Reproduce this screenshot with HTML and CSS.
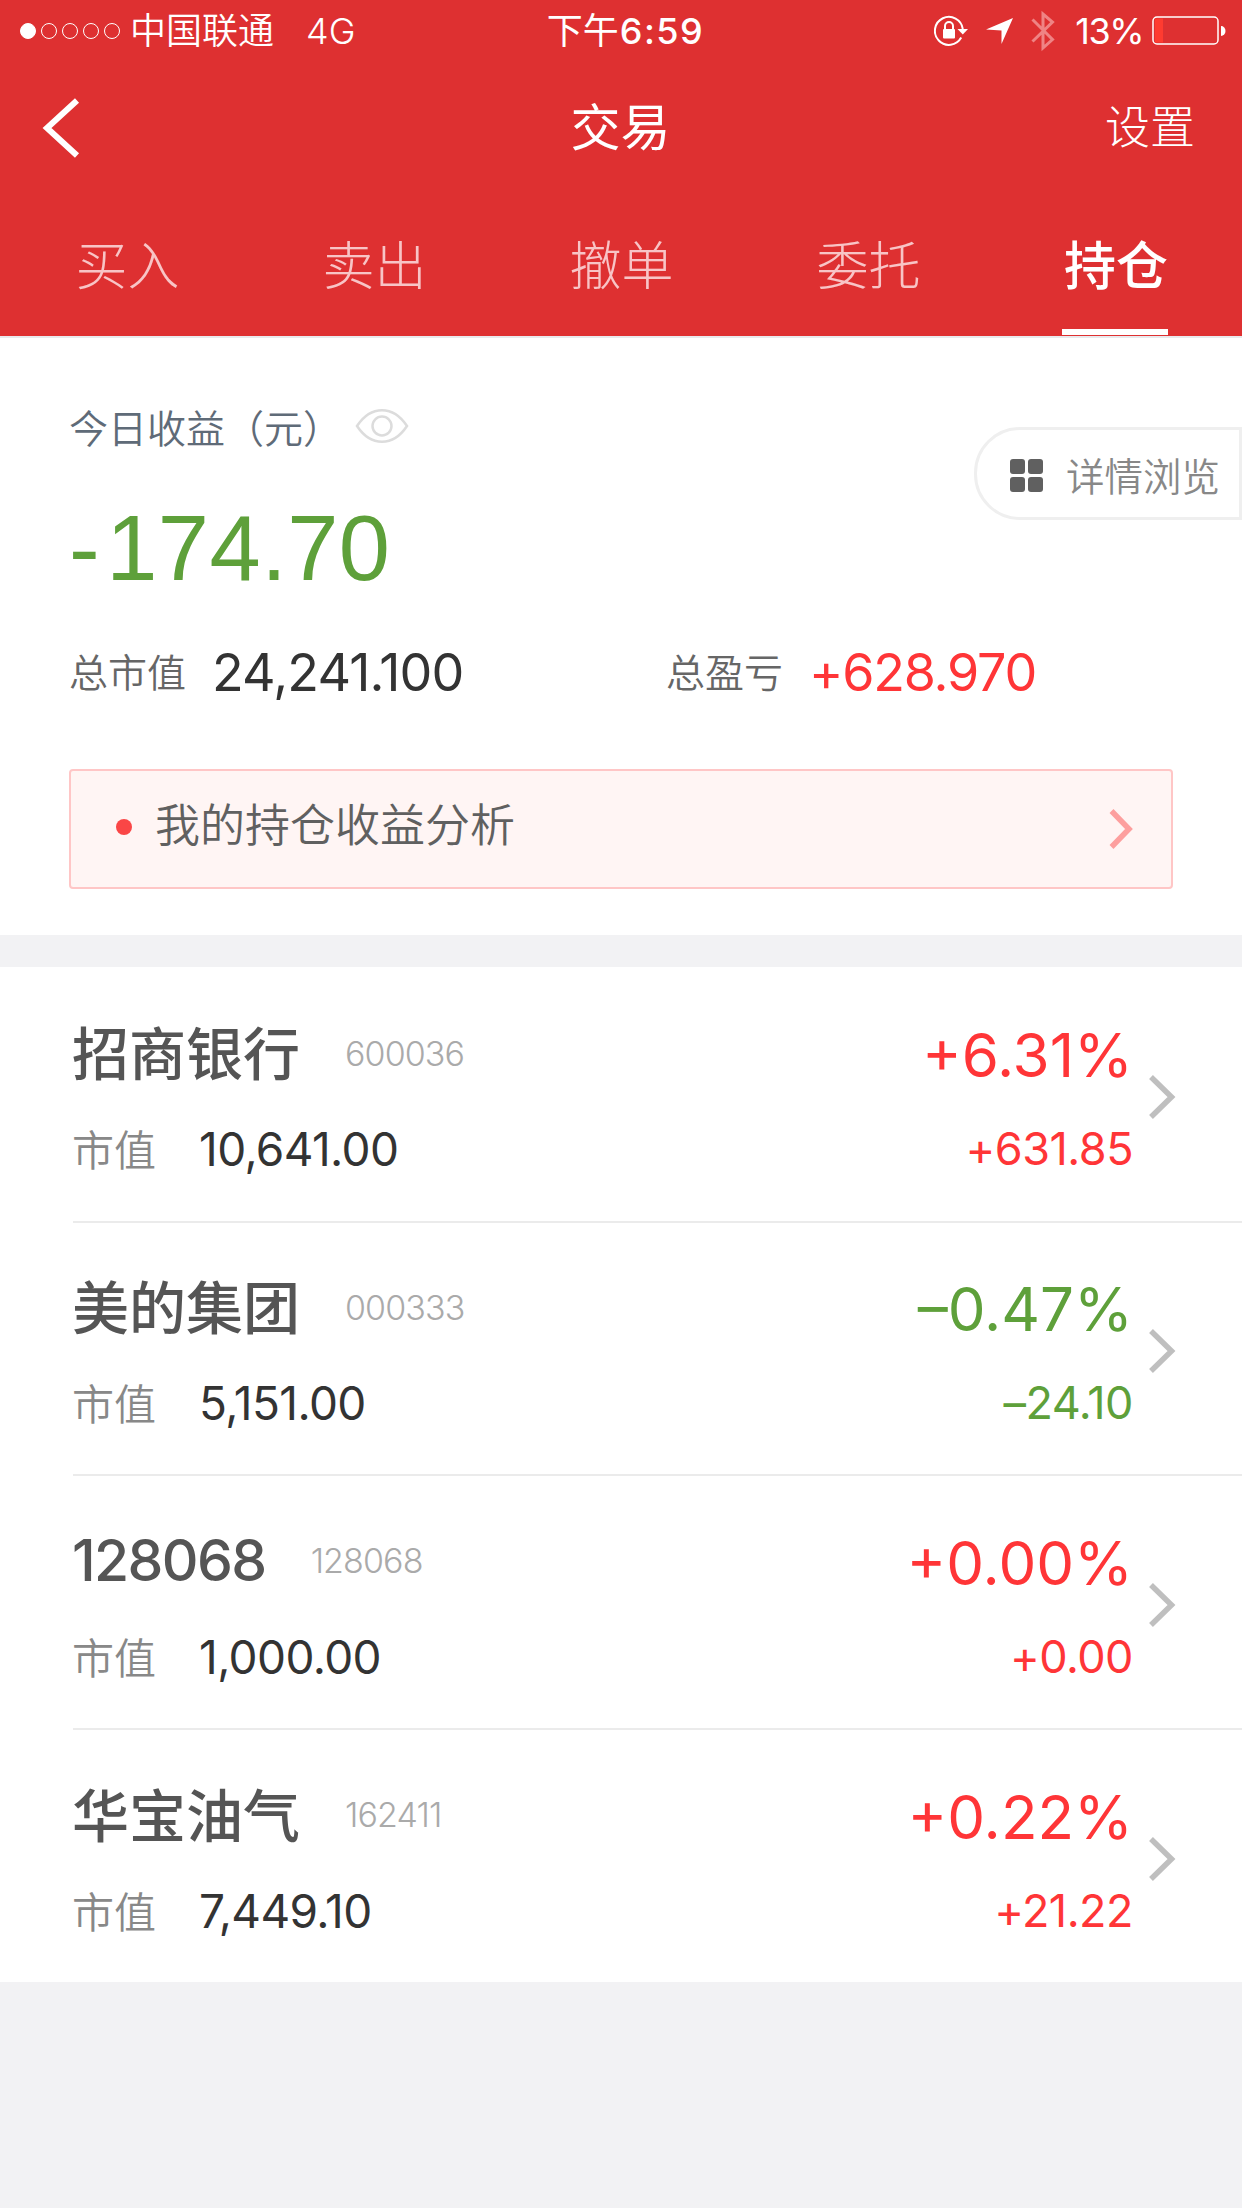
FILE: index.html
```html
<!DOCTYPE html>
<html lang="zh-CN">
<head>
  <meta charset="UTF-8" />
  <meta name="viewport" content="width=device-width, initial-scale=1.0"/>
  <title>交易 - 持仓</title>
  <link rel="stylesheet" href="styles.css">
</head>

<body>
  <header class="header">
    <!-- 状态栏 -->
    <div class="status-bar">
      <div class="status-left">
        <div class="signal">
          <i class="dot full"></i><i class="dot"></i><i class="dot"></i><i class="dot"></i><i class="dot"></i>
        </div>
        <span class="carrier">中国联通</span>
        <span class="network">4G</span>
      </div>
      <div class="status-time">下午<span class="clock">6:59</span></div>
      <div class="status-right">
        <svg class="icon-lock" width="34" height="32" viewBox="0 0 34 32">
          <path d="M27.2 22.6A14 14 0 1 1 28.8 14" fill="none" stroke="#fff" stroke-width="2"/>
          <path d="M23.5 14H34L28.8 19.5Z" fill="#fff"/>
          <rect x="9" y="14" width="12" height="9.5" rx="1" fill="#fff"/>
          <path d="M11 15V11a4 4 0 0 1 8 0v4" fill="none" stroke="#fff" stroke-width="2"/>
        </svg>
        <svg class="icon-location" width="28" height="28" viewBox="0 0 28 28">
          <path d="M27 1L15.500 27V13.500L0 12.500Z" fill="#fff"/>
        </svg>
        <svg class="icon-bluetooth" width="24" height="42" viewBox="0 0 24 42">
          <path d="M1.500 9.500L21.500 29.500L12 38V4L21.500 12L1.500 31.500" fill="none" stroke="#ef8384" stroke-width="3"/>
        </svg>
        <span class="battery-text">13%</span>
        <svg class="icon-battery" width="74" height="30" viewBox="0 0 74 30">
          <rect x="1" y="1" width="65" height="27" rx="4" fill="none" stroke="#fff" stroke-width="1.500"/>
          <rect x="3" y="2.500" width="8" height="24" fill="#ff3b30"/>
          <path d="M69 10a4.500 5 0 0 1 0 10Z" fill="#fff"/>
        </svg>
      </div>
    </div>

    <!-- 导航栏 -->
    <div class="nav-bar">
      <svg class="back-btn" width="40" height="62" viewBox="0 0 40 62">
        <path d="M35 3.500L5 31L35 58.500" fill="none" stroke="#fff" stroke-width="6"/>
      </svg>
      <h1 class="nav-title">交易</h1>
      <a class="nav-setting">设置</a>
    </div>

    <!-- 选项卡 -->
    <nav class="tabs">
      <a class="tab">买入</a>
      <a class="tab">卖出</a>
      <a class="tab">撤单</a>
      <a class="tab">委托</a>
      <a class="tab active">持仓</a>
    </nav>
  </header>

  <!-- 收益概览 -->
  <section class="summary">
    <div class="summary-top">
      <div class="today">
        <div class="today-label">
          <span>今日收益（元）</span>
          <svg class="icon-eye" width="54" height="36" viewBox="0 0 54 36">
            <path d="M2 18C16-3 38-3 52 18C38 39 16 39 2 18Z" fill="none" stroke="#dcdcdc" stroke-width="2.500"/>
            <circle cx="27" cy="18" r="9.500" fill="none" stroke="#dcdcdc" stroke-width="2.500"/>
          </svg>
        </div>
        <div class="today-value"><span class="sign">-</span>174.70</div>
      </div>
      <a class="detail-btn">
        <svg class="icon-grid" width="33" height="33" viewBox="0 0 33 33" fill="#606060">
          <rect width="15" height="15" rx="3"/>
          <rect x="18" width="15" height="15" rx="3"/>
          <rect y="18" width="15" height="15" rx="3"/>
          <rect x="18" y="18" width="15" height="15" rx="3"/>
        </svg>
        <span>详情浏览</span>
      </a>
    </div>
    <div class="totals">
      <div class="total"><span class="total-label">总市值</span><span class="total-value">24,241.100</span></div>
      <div class="total"><span class="total-label">总盈亏</span><span class="total-value profit up">+628.970</span></div>
    </div>
    <a class="analysis">
      <i class="analysis-dot"></i>
      <span class="analysis-text">我的持仓收益分析</span>
      <svg width="25" height="42" viewBox="0 0 25 42">
        <path d="M3.500 3L21 21L3.500 39" fill="none" stroke="#fd9f9e" stroke-width="5.500"/>
      </svg>
    </a>
  </section>

  <!-- 持仓列表 -->
  <ul class="stock-list">
    <li class="stock">
      <div class="stock-info">
        <div class="stock-head"><span class="stock-name">招商银行</span><span class="stock-code">600036</span></div>
        <div class="stock-market"><span class="market-label">市值</span><span class="market-value">10,641.00</span></div>
      </div>
      <div class="stock-profit up">
        <div class="percent">+6.31%</div>
        <div class="amount">+631.85</div>
      </div>
      <svg class="arrow" width="28" height="46" viewBox="0 0 28 46"><path d="M3 3L23.500 23L3 43" fill="none" stroke="#bfbfbf" stroke-width="5.500"/></svg>
    </li>
    <li class="stock">
      <div class="stock-info">
        <div class="stock-head"><span class="stock-name">美的集团</span><span class="stock-code">000333</span></div>
        <div class="stock-market"><span class="market-label">市值</span><span class="market-value">5,151.00</span></div>
      </div>
      <div class="stock-profit down">
        <div class="percent">–0.47%</div>
        <div class="amount">–24.10</div>
      </div>
      <svg class="arrow" width="28" height="46" viewBox="0 0 28 46"><path d="M3 3L23.500 23L3 43" fill="none" stroke="#bfbfbf" stroke-width="5.500"/></svg>
    </li>
    <li class="stock">
      <div class="stock-info">
        <div class="stock-head"><span class="stock-name digits">128068</span><span class="stock-code">128068</span></div>
        <div class="stock-market"><span class="market-label">市值</span><span class="market-value">1,000.00</span></div>
      </div>
      <div class="stock-profit up">
        <div class="percent">+0.00%</div>
        <div class="amount">+0.00</div>
      </div>
      <svg class="arrow" width="28" height="46" viewBox="0 0 28 46"><path d="M3 3L23.500 23L3 43" fill="none" stroke="#bfbfbf" stroke-width="5.500"/></svg>
    </li>
    <li class="stock">
      <div class="stock-info">
        <div class="stock-head"><span class="stock-name">华宝油气</span><span class="stock-code">162411</span></div>
        <div class="stock-market"><span class="market-label">市值</span><span class="market-value">7,449.10</span></div>
      </div>
      <div class="stock-profit up">
        <div class="percent">+0.22%</div>
        <div class="amount">+21.22</div>
      </div>
      <svg class="arrow" width="28" height="46" viewBox="0 0 28 46"><path d="M3 3L23.500 23L3 43" fill="none" stroke="#bfbfbf" stroke-width="5.500"/></svg>
    </li>
  </ul>
</body>
</html>
```

FILE: styles.css
```css
* {
  box-sizing: border-box;
}

body {
  margin: 0;
  min-height: 2208px;
  background-color: #f2f2f4;
  color: #333;
  font-family: Inter, "Noto Sans CJK SC", sans-serif;
  font-weight: 350;
}

svg {
  display: block;
  flex: none;
}

/* 顶部 */
.header {
  height: 338px;
  background-color: #de3031;
  border-bottom: 2px solid #e9e9ec;
  color: #fff;
}

.status-bar {
  display: grid;
  grid-template-columns: 1fr auto 1fr;
  align-items: center;
  height: 62px;
  padding: 0 16px 0 20px;
  font-size: 36px;
  line-height: 62px;
  font-weight: 400;
}

.status-left,
.status-right {
  display: flex;
  align-items: center;
}

.status-right {
  justify-content: flex-end;
}

.signal {
  display: flex;
  gap: 5px;
}

.dot {
  width: 16px;
  height: 16px;
  border: 1px solid #fff;
  border-radius: 50%;
}

.dot.full {
  background-color: #fff;
}

.carrier {
  margin-left: 10px;
  font-weight: 350;
}

.network {
  margin-left: 32px;
  font-weight: 350;
}

.status-time {
  padding-left: 5px;
}

.clock {
  margin-left: 1px;
  font-weight: 500;
  letter-spacing: 1.500px;
}

.icon-location {
  margin-left: 18px;
}

.icon-bluetooth {
  margin-left: 17px;
}

.battery-text {
  margin: 0 9px 0 20px;
  letter-spacing: -1.500px;
}

/* 导航栏 */
.nav-bar {
  display: grid;
  grid-template-columns: 1fr auto 1fr;
  align-items: center;
  height: 132px;
  padding: 0 47px 0 42px;
}

.nav-title {
  margin: 0;
  padding-left: 4px;
  font-size: 50px;
  font-weight: 400;
  line-height: 80px;
}

.nav-setting {
  justify-self: end;
  font-size: 45px;
  font-weight: 300;
  line-height: 80px;
}

.tabs {
  display: flex;
  height: 142px;
  padding: 0 3px 0 4px;
}

.tab {
  display: flex;
  justify-content: center;
  width: 247px;
  font-size: 52px;
  font-weight: 300;
  line-height: 145px;
  color: #f8c4c6;
}

.tab.active {
  color: #fff;
  font-weight: 500;
}

.tab.active::after {
  content: "";
  align-self: flex-end;
  width: 106px;
  height: 6px;
  margin: 0 -1px 1px -106px;
  background-color: #fff;
}

/* 收益概览 */
.summary {
  height: 597px;
  padding: 55px 0 0 69px;
  background-color: #fff;
}

.summary-top {
  display: flex;
  justify-content: space-between;
}

.today-label {
  display: flex;
  align-items: center;
  height: 66px;
  font-size: 39px;
  color: #5f6b78;
}

.icon-eye {
  margin-left: 13px;
}

.today-value {
  font-family: "Liberation Sans", Arial, sans-serif;
  font-size: 92px;
  line-height: 110px;
  margin-top: 34px;
  letter-spacing: 0.500px;
  color: #5ea03a;
}

.sign {
  margin-right: 6px;
}

.detail-btn {
  display: flex;
  align-items: center;
  gap: 23px;
  width: 268px;
  height: 93px;
  margin-top: 34px;
  padding-left: 33px;
  border: 3px solid #efefef;
  border-radius: 46px 0 0 46px;
  font-size: 38.500px;
  color: #888;
}

.icon-grid {
  margin-top: 4px;
}

.totals {
  display: flex;
  margin-top: 34px;
}

.total {
  display: flex;
  flex: none;
  align-items: center;
  width: 597px;
  height: 70px;
}

.total + .total {
  width: auto;
}

.total-label {
  padding-bottom: 4px;
  font-size: 39px;
  color: #666;
}

.total-value {
  margin-left: 26px;
  font-size: 52px;
  font-weight: 400;
  letter-spacing: -0.800px;
}

.total-value.profit {
  letter-spacing: -1.200px;
}

.analysis {
  display: flex;
  align-items: center;
  width: 1104px;
  height: 120px;
  margin-top: 62px;
  padding: 0 38px 0 45px;
  background-color: #fff5f4;
  border: 2px solid #ffc6c6;
  border-radius: 4px;
}

.analysis-dot {
  width: 16px;
  height: 16px;
  margin-bottom: 4px;
  border-radius: 50%;
  background-color: #fa4646;
}

.analysis-text {
  flex: 1;
  margin-left: 23px;
  padding-bottom: 13px;
  font-size: 45px;
  color: #606060;
}

/* 持仓列表 */
.stock-list {
  list-style: none;
  margin: 32px 0 0;
  padding: 0 0 0 73px;
  background-color: #fff;
}

.stock {
  display: flex;
  height: 253.700px;
  padding: 46px 66px 0 0;
}

.stock + .stock {
  padding-top: 44.500px;
  border-top: 2px solid #ebebeb;
}

.stock-info {
  flex: 1;
  margin-left: -1px;
}

.stock-head {
  display: flex;
  align-items: center;
  height: 80px;
}

.stock-name {
  padding-bottom: 6px;
  font-size: 57px;
  font-weight: 500;
  color: #555;
}

.stock-name.digits {
  padding-bottom: 0;
  letter-spacing: -1.600px;
}

.stock-code {
  margin-left: 45px;
  font-size: 34px;
  font-weight: 300;
  letter-spacing: -0.900px;
  color: #aaa;
}

.stock-market {
  display: flex;
  align-items: center;
  height: 60px;
  margin-top: 26px;
}

.market-label {
  padding-bottom: 3px;
  font-size: 42px;
  color: #888;
}

.market-value {
  margin-left: 43px;
  font-size: 46px;
  font-weight: 400;
  letter-spacing: -0.600px;
}

.stock-profit {
  text-align: right;
}

.percent {
  font-size: 60px;
  font-weight: 400;
  line-height: 84px;
}

.amount {
  margin-top: 22px;
  font-size: 45px;
  font-weight: 400;
  line-height: 60px;
  letter-spacing: -0.500px;
}

.arrow {
  margin: 61px 0 0 15px;
}

.up {
  color: #ff3537;
}

.down {
  color: #5ea03a;
}
```
